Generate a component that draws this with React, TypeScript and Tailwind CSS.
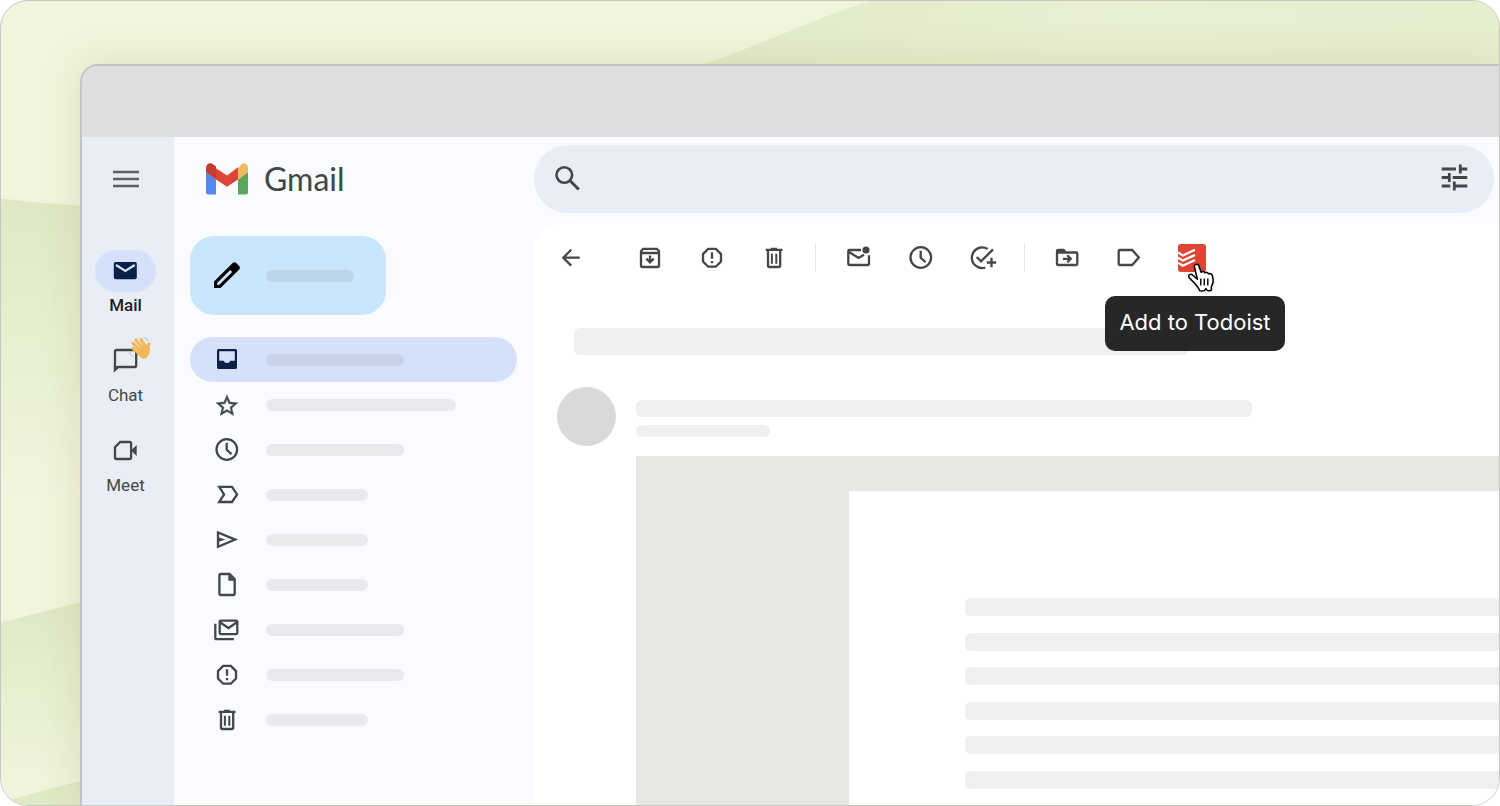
import type { ReactNode } from "react";
import clsx from "clsx";

type IconProps = { children: ReactNode; className?: string };

const Icon = ({ children, className }: IconProps) => (
  <svg
    viewBox="0 0 29 29"
    fill="none"
    stroke="currentColor"
    strokeWidth="2.300"
    aria-hidden="true"
    className={clsx("size-[29px] shrink-0 overflow-visible", className)}
  >
    {children}
  </svg>
);

const InboxIcon = () => (
  <Icon className="text-[#0b1f47]">
    <path
      fill="currentColor"
      stroke="none"
      fillRule="evenodd"
      d="M6.500 4h17A1.500 1.500 0 0 1 25 5.500v17a1.500 1.500 0 0 1-1.500 1.500h-17A1.500 1.500 0 0 1 5 22.500v-17A1.500 1.500 0 0 1 6.500 4zM7.200 6.200v9.500h4.300a3.800 3.800 0 0 0 7 0h4.300V6.200z"
    />
  </Icon>
);

const StarIcon = () => (
  <Icon>
    <path
      fill="currentColor"
      strokeWidth=".4"
      transform="translate(1.900 2.700) scale(1.090)"
      d="M22 9.240l-7.190-.62L12 2 9.190 8.630 2 9.240l5.460 4.730L5.820 21 12 17.270 18.180 21l-1.630-7.030L22 9.240zM12 15.400l-3.760 2.270 1-4.280-3.320-2.880 4.380-.38L12 6.100l1.710 4.040 4.380.38-3.320 2.880 1 4.280L12 15.400z"
    />
  </Icon>
);

const ClockIcon = () => (
  <Icon>
    <circle cx="14.800" cy="14.500" r="10.300" />
    <path d="M14.700 7.800v7l4.800 4.400" />
  </Icon>
);

const ImportantIcon = () => (
  <Icon>
    <path d="M7.200 6.800H20l5.100 7.600L20 22H7.200l4.900-7.600z" />
  </Icon>
);

const SendIcon = () => (
  <Icon>
    <path d="M6 7.500v14.300l17.200-7.200z" />
    <path fill="currentColor" stroke="none" d="M6 12.300l7.500 2.300L6 16.900z" />
  </Icon>
);

const FileIcon = () => (
  <Icon>
    <path d="M9 4h8.600l5.100 5.200v14.200A1.600 1.600 0 0 1 21.100 25H9a1.600 1.600 0 0 1-1.600-1.600V5.600A1.600 1.600 0 0 1 9 4z" />
    <path fill="currentColor" stroke="none" d="M16.300 4v6.700h6.900z" />
  </Icon>
);

const AllMailIcon = () => (
  <Icon>
    <rect x="7.700" y="5.700" width="17.600" height="13.400" rx="1" />
    <path d="M8 7.300l8.500 5.700L25 7.300M3.300 8.700v14.600a.8.8 0 0 0 .8.8h17.800" />
  </Icon>
);

const SpamIcon = () => (
  <Icon>
    <path d="M11.200 5.900h7.600l5.200 5.200v7.400l-5.200 5.200h-7.600L6 18.500v-7.400z" />
    <path d="M15 9.300v6.500M15 17.900v2.300" />
  </Icon>
);

const TrashIcon = () => (
  <Icon>
    <path d="M6.700 6.900h16.800M12 6h6M9 7v15.400A1.600 1.600 0 0 0 10.600 24h9a1.600 1.600 0 0 0 1.600-1.600V7" />
    <path strokeWidth="2" d="M12.900 10.700v10M17.300 10.700v10" />
  </Icon>
);

const BackIcon = () => (
  <Icon>
    <path d="M23.700 14.700H8M15.200 6.800l-7.900 7.900 7.900 7.900" />
  </Icon>
);

const ArchiveIcon = () => (
  <Icon>
    <path d="M6 8.300l2.200-2.500h13.600L24 8.300v14.200a1.500 1.500 0 0 1-1.500 1.500h-15A1.500 1.500 0 0 1 6 22.500zM6 10h18" />
    <path d="M15 12.600v6.500M11.300 15.600l3.700 3.700 3.700-3.700" />
  </Icon>
);

const UnreadIcon = () => (
  <Icon>
    <path d="M17 7H5.300A1 1 0 0 0 4.300 8v13a1 1 0 0 0 1 1h18.700a1 1 0 0 0 1-1v-8.700M4.600 8.800l10 6.200 5.300-3.300" />
    <circle cx="22" cy="7" r="3.600" fill="currentColor" stroke="none" />
  </Icon>
);

const AddTaskIcon = () => (
  <Icon>
    <path d="M19.700 6a10.300 10.300 0 1 0-2.300 18.500" />
    <path d="M8.700 14l4.300 4.400L25 6.400M23.500 14.800v9.400M18.800 19.500h9.400" />
  </Icon>
);

const MoveIcon = () => (
  <Icon>
    <path d="M5 9.500h18.300a1 1 0 0 1 1 1V21a1 1 0 0 1-1 1H5a1 1 0 0 1-1-1V8a1 1 0 0 1 1-1h5.500l2.500 2.500" />
    <path fill="currentColor" stroke="none" d="M4 6.500h7l3 3.500H4z" />
    <path d="M10 15.800h7.500M14.300 12.300l3.500 3.500-3.500 3.500" />
  </Icon>
);

const LabelIcon = () => (
  <Icon>
    <path d="M4.700 7h12.500l6.600 7.500-6.600 7.500H4.700a1 1 0 0 1-1-1V8a1 1 0 0 1 1-1z" />
  </Icon>
);

const MailIcon = () => (
  <Icon className="text-[#0b1f47]">
    <rect x="2.800" y="5" width="23" height="17.300" rx="1.800" fill="currentColor" stroke="none" />
    <path stroke="#d5e1fb" d="M5 8l9.300 6L23.700 8" />
  </Icon>
);

const ChatIcon = () => (
  <Icon>
    <path d="M4 22.800V4.400a1.400 1.400 0 0 1 1.400-1.400h18.400a1.400 1.400 0 0 1 1.400 1.400v14.200a1.400 1.400 0 0 1-1.400 1.400H6.800z" />
    <path fill="currentColor" stroke="none" d="M2.900 18v7.500l5-5z" />
  </Icon>
);

const MeetIcon = () => (
  <Icon>
    <path d="M9.300 5h9.300a1.500 1.500 0 0 1 1.500 1.500v14a1.500 1.500 0 0 1-1.500 1.500H5.500a1.500 1.500 0 0 1-1.500-1.500V10.300z" />
    <path fill="currentColor" stroke="none" d="M20 13.500l5.700-5.500v11z" />
  </Icon>
);

const WaveHand = () => (
  <svg viewBox="0 0 24 24" fill="none" strokeLinecap="round" className="size-6" aria-hidden="true">
    <g stroke="#f0b85a" strokeWidth="3.200">
      <path d="M13 15L5 7.300M15 12.500L8 4M17 10l-4-6.500M11.500 17.500L5 12.500" />
      <path d="M20 14c-.3-2.500.2-4.500 1.100-6" />
    </g>
    <path
      fill="#f0b85a"
      d="M9.500 18l-1-4.500 8.500-6 4.500 4c.6 5.500-1 9.500-4 11-3 1-5.500-1-8-4.500z"
    />
    <path stroke="#f9dfae" strokeWidth=".6" d="M12.500 12L6.500 6M14.500 10L10 4.500M9.500 15L5.500 10.500" />
    <path stroke="#b9bcc2" strokeWidth="1" d="M16 1.500c2 .3 3.500 1.600 4 3.400M1.500 16.500c.4 1.900 1.600 3.200 3.500 4" />
  </svg>
);

const GmailLogo = () => (
  <svg viewBox="0 0 42 32" className="h-8 w-[42px]" aria-hidden="true">
    <path fill="#5488ee" d="M0 9l10 7.500V31.500H2.500A2.500 2.500 0 0 1 0 29z" />
    <path fill="#5ba65d" d="M42 9l-10 7.500v15h7.500A2.500 2.500 0 0 0 42 29z" />
    <path fill="#f0bb5b" d="M32 5l2.500-2.500C37.500-1.200 42 .5 42 5v4.200l-10 7.500z" />
    <path fill="#dd4637" d="M10 5.200L21 12.500 32 4.300v12.200L21 23.800 10 16.500z" />
    <path fill="#c43c30" d="M0 5C0 .5 4.500-1.200 8 2l2 1.600v13L0 9.200z" />
  </svg>
);

const TodoistLogo = () => (
  <svg viewBox="0 0 28 28" className="size-7" aria-hidden="true">
    <rect width="28" height="28" rx="3" fill="#dd4535" />
    <path
      fill="none"
      stroke="#fff"
      strokeWidth="2.200"
      d="M0 8.500l4.800 3L17 5.800M0 13.600l4.800 3L17 10.900M0 18.700l4.800 3L17 16"
    />
  </svg>
);

const HandCursor = () => (
  <svg viewBox="0 0 28 30" className="h-[30px] w-7 drop-shadow-sm" aria-hidden="true">
    <path
      fill="#fff"
      stroke="#000"
      strokeWidth="1.500"
      strokeLinejoin="round"
      d="M6.500 4c-.7-2.800 3.400-3.900 4.400-1l2.200 6.300c1-1.300 3.300-1.100 3.800.6 1.100-1 3.100-.6 3.600 1 1.300-.7 3.300-.2 3.800 1.600.8 2.600 1 4.700.7 7-.4 2-1.500 3-1.700 4.800v3c-1.500.6-3 .5-4.300-.2l-1.200-1.500-1.400 2c-1.500.4-3.300.4-4.800 0-.3-2.200-2.500-4.200-4.500-6.900L1 14.500c-1.200-2.600 1.800-4.200 3.800-2.300l4.500 4z"
    />
    <path stroke="#000" strokeWidth="1.400" d="M12.800 15.500v7M16.300 15.500v7M19.800 15.500v7" />
  </svg>
);

const Backdrop = () => (
  <svg
    viewBox="0 0 1500 806"
    preserveAspectRatio="none"
    className="absolute inset-0 size-full"
    aria-hidden="true"
  >
    <defs>
      <linearGradient id="fold" x1="0" y1="0" x2="0" y2="1">
        <stop offset="0" stopColor="#dfe7c5" />
        <stop offset=".45" stopColor="#e6efd0" />
        <stop offset="1" stopColor="#f1f5df" />
      </linearGradient>
      <linearGradient id="ridge" x1="0" y1="0" x2="1" y2="0">
        <stop offset="0" stopColor="#e1eac8" />
        <stop offset=".5" stopColor="#e8efd2" />
        <stop offset="1" stopColor="#e6eed0" />
      </linearGradient>
    </defs>
    <path fill="url(#ridge)" d="M682 70C756 48 796 24 870 0h630v70z" />
    <path fill="url(#fold)" d="M0 198q40 5 90 8v290H0z" />
    <path fill="url(#fold)" d="M0 623l90-23v200H0z" />
    <path fill="#dfe9c5" d="M0 803l90-24v27H0z" />
  </svg>
);

const railItems = [
  { label: "Mail", icon: <MailIcon />, active: true },
  { label: "Chat", icon: <ChatIcon />, wave: true },
  { label: "Meet", icon: <MeetIcon /> },
];

const folders = [
  { name: "Inbox", icon: <InboxIcon />, width: "w-[138px]", active: true },
  { name: "Starred", icon: <StarIcon />, width: "w-[190px]" },
  { name: "Snoozed", icon: <ClockIcon />, width: "w-[138px]" },
  { name: "Important", icon: <ImportantIcon />, width: "w-[102px]" },
  { name: "Sent", icon: <SendIcon />, width: "w-[102px]" },
  { name: "Drafts", icon: <FileIcon />, width: "w-[102px]" },
  { name: "All Mail", icon: <AllMailIcon />, width: "w-[138px]" },
  { name: "Spam", icon: <SpamIcon />, width: "w-[138px]" },
  { name: "Trash", icon: <TrashIcon />, width: "w-[102px]" },
];

const actionGroups = [
  [
    { name: "Archive", icon: <ArchiveIcon /> },
    { name: "Report spam", icon: <SpamIcon /> },
    { name: "Delete", icon: <TrashIcon /> },
  ],
  [
    { name: "Mark as unread", icon: <UnreadIcon /> },
    { name: "Snooze", icon: <ClockIcon /> },
    { name: "Add to tasks", icon: <AddTaskIcon /> },
  ],
  [
    { name: "Move to", icon: <MoveIcon /> },
    { name: "Labels", icon: <LabelIcon /> },
  ],
];

const Rail = () => (
  <nav className="flex w-[92px] shrink-0 flex-col items-center bg-[#e9eef6] pt-[21px] pr-[5px] text-[#444746]">
    <button aria-label="Main menu" className="flex h-[42px] w-[61px] items-center justify-center">
      <svg viewBox="0 0 26 18" className="h-[18px] w-[26px]" aria-hidden="true">
        <path stroke="#5f6163" strokeWidth="2.500" d="M0 2h26M0 9h26M0 16h26" />
      </svg>
    </button>
    <div className="mt-[50px] flex flex-col gap-[25px]">
      {railItems.map((item) => (
        <a key={item.label} href="#" className="flex flex-col items-center gap-[3px]">
          <span
            className={clsx(
              "relative flex h-[42px] w-[61px] items-center justify-center rounded-full",
              item.active && "bg-[#d5e1fb]",
            )}
          >
            {item.icon}
            {item.wave && (
              <span className="absolute -top-1 right-1">
                <WaveHand />
              </span>
            )}
          </span>
          <span
            className={clsx(
              "text-[17px] leading-5",
              item.active && "font-medium text-[#1f1f1f]",
            )}
          >
            {item.label}
          </span>
        </a>
      ))}
    </div>
  </nav>
);

const Sidebar = () => (
  <aside className="w-[360px] shrink-0 pl-4 text-[#444746]">
    <div className="flex h-[84px] items-center gap-4 pl-4">
      <GmailLogo />
      <span className="font-['Lato',sans-serif] text-[32px] leading-10">Gmail</span>
    </div>
    <button
      aria-label="Compose"
      className="mt-[15px] flex h-[79px] w-[196px] items-center gap-[25px] rounded-3xl bg-[#c9e6fd] pl-[22px]"
    >
      <Icon className="text-black">
        <path
          fill="currentColor"
          stroke="none"
          fillRule="evenodd"
          d="M2 27v-6.500L20.700 2a2.500 2.500 0 0 1 3.500 0l3 3a2.500 2.500 0 0 1 0 3.500L8.500 27zM5.100 24.100h2L20.200 11l-2-2L5.100 22.100z"
        />
      </Icon>
      <span className="h-3 w-[88px] rounded-md bg-[#bcd5ea]" />
    </button>
    <ul className="mt-[22px] w-[327px]">
      {folders.map((folder) => (
        <li key={folder.name}>
          <a
            href="#"
            aria-label={folder.name}
            className={clsx(
              "flex h-[45px] items-center gap-[25px] rounded-full pl-[22px]",
              folder.active && "bg-[#d5e1fb]",
            )}
          >
            {folder.icon}
            <span
              className={clsx(
                "mt-px h-3 rounded-md",
                folder.width,
                folder.active ? "bg-[#c9d4eb]" : "bg-[#e9eaec]",
              )}
            />
          </a>
        </li>
      ))}
    </ul>
  </aside>
);

const SearchBar = () => (
  <form className="mt-2 mr-[5px] flex h-[68px] items-center rounded-full bg-[#e9eef6] pr-[26px] pl-5 text-[#444746]">
    <button type="button" aria-label="Search">
      <svg viewBox="0 0 28 28" fill="none" stroke="currentColor" className="size-7" aria-hidden="true">
        <circle cx="10.300" cy="10" r="7.800" strokeWidth="2.600" />
        <path strokeWidth="3" d="M15.800 15.500l9 9" />
      </svg>
    </button>
    <input aria-label="Search mail" className="min-w-0 flex-1 bg-transparent px-4 outline-none" />
    <button type="button" aria-label="Search options">
      <svg
        viewBox="0 0 28 28"
        fill="none"
        stroke="currentColor"
        strokeWidth="2.800"
        className="size-7 overflow-visible"
        aria-hidden="true"
      >
        <path d="M1.700 4H16M20.300-.5v9M20.300 4h7M1.700 12.500h7M9.300 8v9M12.700 12.500h14.600M1.700 21h8.600M14.300 16.500v9M14.300 21h13" />
      </svg>
    </button>
  </form>
);

const Toolbar = () => (
  <div className="flex items-center text-[#444746]">
    <button aria-label="Back" className="mr-[50px]">
      <BackIcon />
    </button>
    {actionGroups.map((group, i) => (
      <div key={group[0].name} className="flex items-center">
        {i > 0 && <span className="mr-7 ml-[27px] h-7 w-px bg-[#e4e6ee]" />}
        <div className="flex gap-[33px]">
          {group.map((action) => (
            <button key={action.name} aria-label={action.name}>
              {action.icon}
            </button>
          ))}
        </div>
      </div>
    ))}
    <div className="relative ml-[34px]">
      <button aria-label="Add to Todoist" className="block">
        <TodoistLogo />
      </button>
      <span className="absolute top-[19px] left-[10px] z-10">
        <HandCursor />
      </span>
      <div
        role="tooltip"
        className="absolute top-[52px] -left-[73px] z-10 flex h-[55px] w-[180px] items-center justify-center rounded-[10px] bg-[#272727] pb-px font-['Inter',sans-serif] text-[22px] whitespace-nowrap text-white"
      >
        Add to Todoist
      </div>
    </div>
  </div>
);

const Message = () => (
  <main className="mt-[11px] flex min-h-0 flex-1 flex-col rounded-tl-3xl bg-white pt-[19px] pl-[22px]">
    <Toolbar />
    <div className="mt-14 ml-[18px] h-[27px] w-[615px] rounded-md bg-[#efefee]" />
    <div className="mt-8 ml-px flex items-center gap-5">
      <span className="size-[59px] shrink-0 rounded-full bg-[#d9d9d9]" />
      <div className="flex flex-col gap-2 pt-1">
        <span className="h-[17px] w-[616px] rounded-md bg-[#efefee]" />
        <span className="h-3 w-[134px] rounded-md bg-[#efefee]" />
      </div>
    </div>
    <div className="mt-[10px] ml-20 min-h-0 flex-1 bg-[#e8e7e3] pt-[35px] pl-[213px]">
      <div className="h-full bg-white pt-[107px] pl-[116px]">
        <div className="flex h-[225px] flex-col justify-between">
          {Array.from({ length: 7 }, (_, i) => (
            <span key={i} className="h-[18px] rounded-l-md bg-[#efefee]" />
          ))}
        </div>
      </div>
    </div>
  </main>
);

export default function App() {
  return (
    <div className="h-screen bg-white font-['Roboto',sans-serif]">
      <div className="relative h-full overflow-hidden rounded-[28px] border border-[#c6c8c0] bg-[#f0f5dd] pt-[63px] pl-[79px]">
        <Backdrop />
        <div className="relative flex h-full flex-col overflow-hidden rounded-tl-[18px] border-t-2 border-l-2 border-[#c2c3c8] bg-[#f9fbff] shadow-[0_0_40px_rgba(150,130,50,0.18)]">
          <div className="h-[71px] shrink-0 bg-[#dedede]" />
          <div className="flex min-h-0 flex-1">
            <Rail />
            <Sidebar />
            <div className="flex min-w-0 flex-1 flex-col">
              <SearchBar />
              <Message />
            </div>
          </div>
        </div>
      </div>
    </div>
  );
}
